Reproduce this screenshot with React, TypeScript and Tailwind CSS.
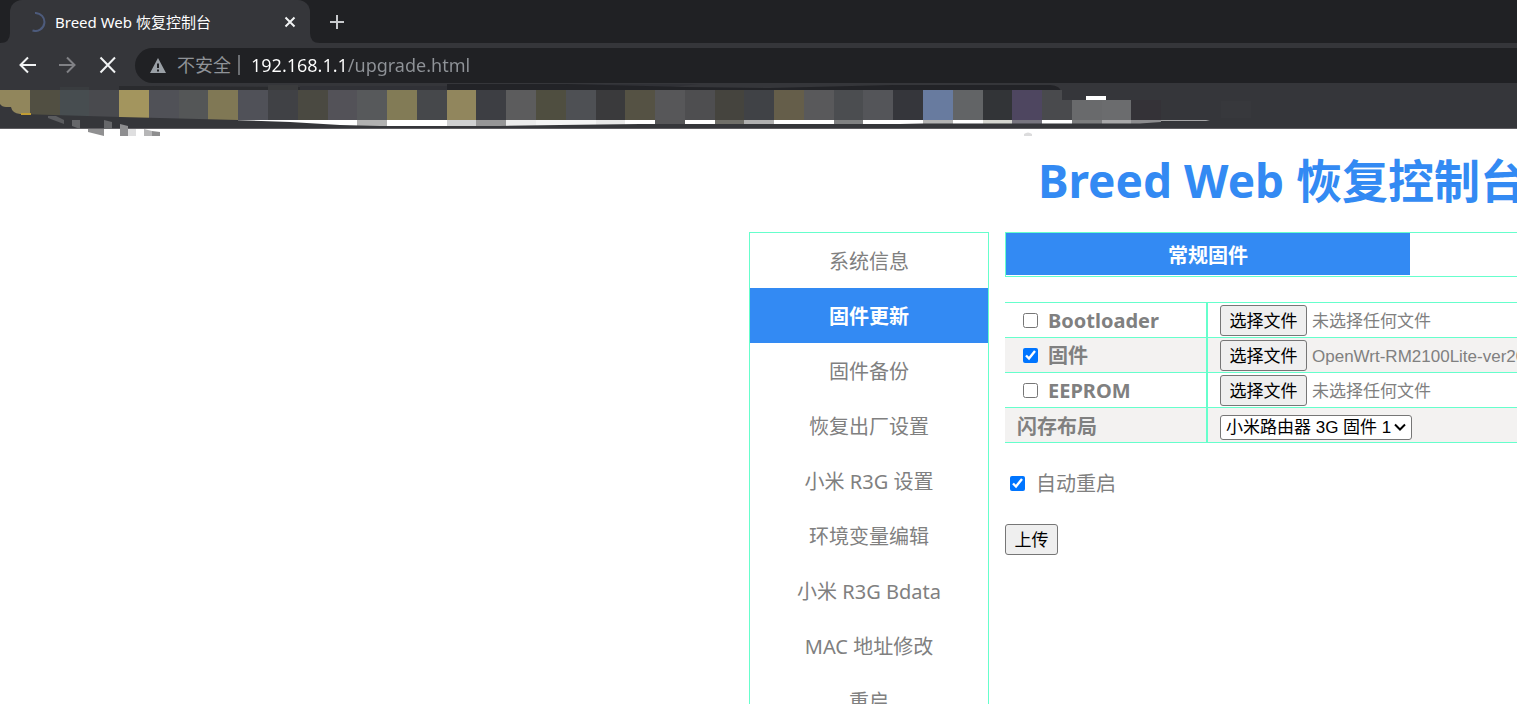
import { useState } from 'react';

const menuItems = [
  '系统信息',
  '固件更新',
  '固件备份',
  '恢复出厂设置',
  '小米 R3G 设置',
  '环境变量编辑',
  '小米 R3G Bdata',
  'MAC 地址修改',
  '重启',
];

const fileRows = [
  { id: 'bootloader', label: 'Bootloader', checked: false, file: '未选择任何文件' },
  { id: 'firmware', label: '固件', checked: true, file: 'OpenWrt-RM2100Lite-ver20210315.bin' },
  { id: 'eeprom', label: 'EEPROM', checked: false, file: '未选择任何文件' },
];

// [x, width, color] of each block in the pixelated bookmark strip
const blocks: [number, number, string][] = [
  [30, 30, '#514f42'], [60, 29, '#474d50'], [89, 30, '#494a4e'],
  [119, 30, '#a3955e'], [149, 30, '#505157'], [179, 29, '#545657'], [208, 30, '#807855'],
  [238, 30, '#505158'], [268, 30, '#404145'], [298, 30, '#4a4941'], [328, 29, '#535258'],
  [357, 30, '#57595b'], [387, 30, '#827b56'], [417, 30, '#46484b'], [447, 29, '#91865d'],
  [476, 30, '#3d3e43'], [506, 30, '#5c5c5d'], [536, 30, '#4f4e40'], [566, 30, '#4e5054'],
  [596, 29, '#3a3a3c'], [625, 30, '#555244'], [655, 30, '#575759'], [685, 30, '#4e4e50'],
  [715, 29, '#45443e'], [744, 30, '#404246'], [774, 30, '#655e4a'], [804, 30, '#59595b'],
  [834, 29, '#4b4d50'], [863, 30, '#545559'], [893, 30, '#35363b'], [923, 30, '#687b9f'],
  [953, 30, '#626466'], [983, 29, '#323437'], [1012, 30, '#4e4660'], [1042, 30, '#494a4d'],
];

// grey blocks that sit on the white sliver below the strip
const tails: [number, number, string][] = [
  [357, 30, '#b1b1b1'], [447, 29, '#cfd0d1'], [476, 30, '#969697'], [506, 30, '#ececec'],
  [536, 60, '#f4f4f4'], [596, 29, '#e8e8e8'], [655, 30, '#575759'], [715, 29, '#706f69'],
  [744, 30, '#b0b0b0'], [834, 29, '#808182'], [923, 30, '#b3b3b3'], [983, 29, '#d5d6d0'],
  [1012, 30, '#77757f'], [1072, 30, '#7c7d7e'], [1102, 29, '#a8a8a9'], [1131, 30, '#8c8c8e'],
];

function BookmarkStrip() {
  return (
    <svg className="pointer-events-none absolute left-0 top-0" width="1300" height="54" viewBox="0 83 1300 54" aria-hidden="true">
      <path d="M119 86H149L300 87V90H119Z" fill="#2a2b2e" />
      <path d="M300 86H447V84H700L640 90H300Z" fill="#303136" />
      <path d="M447 84H566L685 87L770 88L893 85H1050Q1061 86 1061 92V100H1058V90H447Z" fill="#222327" />
      <rect x="60" y="87" width="29" height="4" fill="#393c3f" />
      <rect x="268" y="85" width="30" height="6" fill="#3a3b3d" />
      <path d="M0 90H30V114H20Q12 113 11 107H6Q2 107 0 104Z" fill="#91865c" />
      {blocks.map(([x, w, color]) => (
        <rect key={x} x={x} y="90" width={w} height="30" fill={color} />
      ))}
      <rect x="1072" y="100" width="30" height="20" fill="#696a6c" />
      <rect x="1102" y="100" width="29" height="20" fill="#6b6c6e" />
      <rect x="1131" y="100" width="30" height="20" fill="#343237" />
      <path d="M1062 90H1072V100H1062Z" fill="#35363a" />
      <rect x="1086" y="96" width="20" height="4" fill="#fff" />
      <rect x="1221" y="101" width="30" height="17" fill="#37383c" />
      <path d="M20 114L120 117L238 120V121H20Z" fill="#35363a" />
      <rect x="21" y="113" width="10" height="2" fill="#c19c33" />
      <rect x="238" y="120" width="902" height="6" fill="#fff" />
      {tails.map(([x, w, color]) => (
        <rect key={x} x={x} y="120" width={w} height="6" fill={color} />
      ))}
      <path d="M1161 120H1206L1210 121H1161Z" fill="#a5a5a6" />
      {/* lower edge of the white sliver */}
      <path d="M230 120L290 122L340 125L380 126L500 126L560 125L640 124H900L923 123.500H1140L1161 122L1210 121V128H230Z" fill="#35363a" />
      <g>
        <path d="M48 116H56L64 120V124L48 118Z" fill="#5b5c5f" />
        <path d="M72 120H80V129L72 126Z" fill="#66676a" />
        <path d="M104 120L112 122V129H104Z" fill="#66676a" />
        <path d="M88 129H104V136L88 132Z" fill="#909091" />
        <path d="M120 124L128 126V136H120Z" fill="#8e8e90" />
        <path d="M128 129H136V136H128Z" fill="#dfdfe0" />
        <path d="M144 129L152 131V136H144Z" fill="#b6b6b7" />
        <path d="M152 131L160 132V136H152Z" fill="#8e8e8f" />
        <path d="M1024 134Q1028 131 1032 134V136H1024Z" fill="#dcdcdd" />
      </g>
    </svg>
  );
}

function BrowserChrome() {
  return (
    <header className="relative z-10 shrink-0 bg-[#35363a] text-[#e8eaed]">
      <div className="flex h-[43px] items-end bg-[#202124]">
        <svg width="10" height="43" viewBox="0 0 10 43" aria-hidden="true">
          <path d="M10 33V43H0Q10 43 10 33Z" fill="#35363a" />
        </svg>
        <div className="flex h-full w-[300px] items-center rounded-t-xl bg-[#35363a] pl-4 pr-3">
          <svg width="20" height="20" viewBox="0 0 20 20" fill="none" aria-hidden="true">
            <path d="M9 1A9 9 0 1 1 6.500 18.500" stroke="#4d5b7c" strokeWidth="2" />
          </svg>
          <span className="ml-[9px] grow pt-0.5 text-[15px] text-white">Breed Web 恢复控制台</span>
          <button type="button" aria-label="关闭标签页" className="flex size-4 items-center justify-center">
            <svg width="12" height="12" viewBox="0 0 12 12" aria-hidden="true">
              <path d="M1.500 1.500L10.500 10.500M10.500 1.500L1.500 10.500" stroke="#f1f3f4" strokeWidth="2" />
            </svg>
          </button>
        </div>
        <svg width="10" height="43" viewBox="0 0 10 43" aria-hidden="true">
          <path d="M0 33V43H10Q0 43 0 33Z" fill="#35363a" />
        </svg>
        <button type="button" aria-label="新标签页" className="ml-[9px] flex h-full w-4 items-center justify-center">
          <svg width="16" height="16" viewBox="0 0 16 16" aria-hidden="true">
            <path d="M8 1V15M1 8H15" stroke="#c8cacd" strokeWidth="2" />
          </svg>
        </button>
      </div>

      <div className="flex h-10 items-center pt-1">
        <nav className="flex w-[135px] shrink-0 items-center gap-5 pl-[18px]">
          <button type="button" aria-label="后退">
            <svg width="20" height="20" viewBox="0 0 20 20" fill="none" aria-hidden="true">
              <path d="M18 10H3M10 2.500L2.500 10L10 17.500" stroke="#f1f3f4" strokeWidth="2" />
            </svg>
          </button>
          <button type="button" aria-label="前进">
            <svg width="20" height="20" viewBox="0 0 20 20" fill="none" aria-hidden="true">
              <path d="M1 10H16M9 2.500L16.500 10L9 17.500" stroke="#808185" strokeWidth="2" />
            </svg>
          </button>
          <button type="button" aria-label="停止">
            <svg width="20" height="20" viewBox="0 0 20 20" fill="none" aria-hidden="true">
              <path d="M2.500 2.500L17 17.500M17 2.500L2.500 17.500" stroke="#f1f3f4" strokeWidth="2" />
            </svg>
          </button>
        </nav>
        <div className="flex h-[35px] grow items-center rounded-l-full bg-[#202124] pl-[15px] text-[18px]">
          <svg width="16" height="15" viewBox="0 0 16 15" aria-hidden="true">
            <path d="M8 0L16 15H0Z" fill="#9aa0a6" />
            <path d="M7 5.500H9V10H7ZM7 11.500H9V13.500H7Z" fill="#202124" />
          </svg>
          <span className="ml-[11px] text-[#8f9398]">不安全</span>
          <span className="ml-[7px] h-5 w-0.5 bg-[#6b6e72]"></span>
          <input
            aria-label="地址"
            defaultValue="192.168.1.1/upgrade.html"
            className="ml-[11px] min-w-0 grow bg-[linear-gradient(90deg,#ffffff_97px,#8f9398_97px)] bg-clip-text text-transparent outline-none"
          />
        </div>
      </div>

      <div className="relative h-[46px] border-b border-[#5f5e62]">
        <BookmarkStrip />
      </div>
    </header>
  );
}

function FilePicker({ file }: { file: string }) {
  return (
    <div className="flex items-center gap-[5px] whitespace-nowrap font-['Liberation_Sans','Noto_Sans_CJK_SC',sans-serif] text-[17px]">
      <button type="button" className="h-[31px] w-[87px] rounded-[3px] border border-[#767676] bg-[#efefef] pt-1 leading-6 text-black">
        选择文件
      </button>
      <span className="pt-1 leading-6">{file}</span>
    </div>
  );
}

export default function App() {
  const [active, setActive] = useState('固件更新');

  return (
    <div className="flex h-screen flex-col overflow-hidden bg-white font-['Noto_Sans','Noto_Sans_CJK_SC',sans-serif]">
      <BrowserChrome />

      <main className="grid min-h-0 flex-1 grid-cols-[minmax(0,1fr)_768px] overflow-hidden text-[20px] text-[#808080]">
        <div className="col-start-2 w-[1066px]">
          <h1 className="h-[103px] pt-5 text-center text-[46px] font-bold leading-[62px] text-[#338af3]">
            Breed Web 恢复控制台
          </h1>

          <div className="flex items-start gap-4">
            {/* Menu */}
            <nav className="w-60 shrink-0 border border-[#66ffcc]">
              {menuItems.map((item) => (
                <a
                  key={item}
                  href="#"
                  onClick={() => setActive(item)}
                  className={
                    item === active
                      ? 'block h-[55px] bg-[#338af3] text-center font-bold leading-[57px] text-white'
                      : 'block h-[55px] text-center leading-[57px]'
                  }
                >
                  {item}
                </a>
              ))}
            </nav>

            {/* Content */}
            <div className="grow">
              <div className="flex h-[45px] border border-[#66ffcc] pb-px">
                <button type="button" className="w-1/2 bg-[#338af3] pt-1 font-bold text-white">
                  常规固件
                </button>
              </div>

              <table className="mt-[25px] w-full border-separate border-spacing-0 border-t border-[#66ffcc]">
                <tbody>
                  {fileRows.map((row) => (
                    <tr key={row.id} className="h-[35px] even:bg-[#f3f2f1]">
                      <th className="w-[203px] border-b border-r-2 border-[#66ffcc] p-0 pl-[18px] text-left font-bold leading-7">
                        <label className="flex items-center gap-[10px]">
                          <input type="checkbox" defaultChecked={row.checked} className="size-[15px] accent-[#0075ff]" />
                          <span className="pt-0.5">{row.label}</span>
                        </label>
                      </th>
                      <td className="border-b border-[#66ffcc] p-0 pl-3">
                        <FilePicker file={row.file} />
                      </td>
                    </tr>
                  ))}
                  <tr className="h-[35px] bg-[#f3f2f1]">
                    <th className="border-b border-r-2 border-[#66ffcc] p-0 pl-3 pt-1 text-left font-bold leading-7">
                      <label htmlFor="layout">闪存布局</label>
                    </th>
                    <td className="border-b border-[#66ffcc] p-0 pl-3 pt-1">
                      <div className="grid w-48 items-center">
                        <select
                          id="layout"
                          className="col-start-1 row-start-1 h-[25px] w-full appearance-none rounded-[3px] border border-[#767676] bg-white pl-[5px] pt-0.5 font-['Liberation_Sans','Noto_Sans_CJK_SC',sans-serif] text-[17px] leading-5 text-black"
                        >
                          <option>小米路由器 3G 固件 1</option>
                        </select>
                        <svg className="pointer-events-none col-start-1 row-start-1 mr-1.5 justify-self-end" width="12" height="8" viewBox="0 0 12 8" fill="none" aria-hidden="true">
                          <path d="M1 1.500L6 6.500L11 1.500" stroke="#000" strokeWidth="2" />
                        </svg>
                      </div>
                    </td>
                  </tr>
                </tbody>
              </table>

              <label className="mt-[25px] flex h-[30px] items-center gap-[11px] pl-[5px]">
                <input type="checkbox" defaultChecked className="size-[15px] accent-[#0075ff]" />
                <span className="pt-0.5">自动重启</span>
              </label>

              <button type="submit" className="mt-[26px] block h-[31px] w-[53px] rounded-[3px] border border-[#767676] bg-[#efefef] text-[17px] leading-6 text-black">
                上传
              </button>
            </div>
          </div>
        </div>
      </main>
    </div>
  );
}
